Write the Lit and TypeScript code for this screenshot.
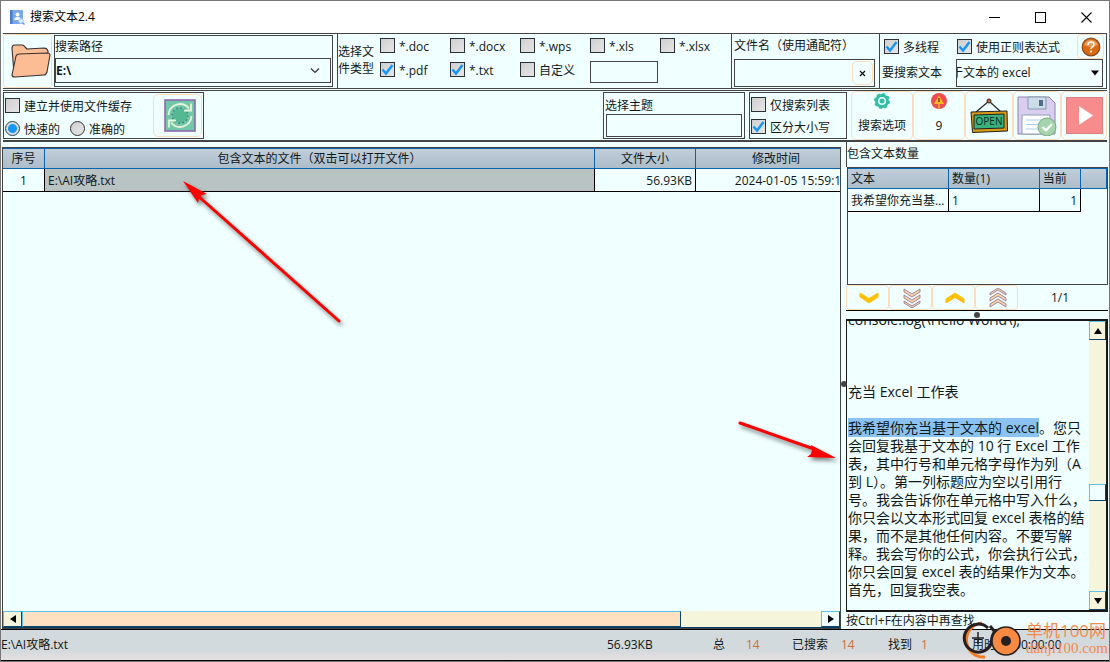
import { LitElement, html, css, svg } from "lit";
import { customElement, state } from "lit/decorators.js";

interface TypeFilter { label: string; on: boolean; }

const chevron = (y: number, color: string) => svg`<path d="M3 ${y}l9 5.5 9-5.5v4l-9 6-9-6z" fill=${color} stroke=${color}/>`;

@customElement("app-root")
export class AppRoot extends LitElement {
  @state() private types: TypeFilter[] = [
    { label: "*.doc", on: false },
    { label: "*.docx", on: false },
    { label: "*.wps", on: false },
    { label: "*.xls", on: false },
    { label: "*.xlsx", on: false },
    { label: "*.pdf", on: true },
    { label: "*.txt", on: true },
    { label: "自定义", on: false },
  ];

  static styles = css`
    :host {
      --ink: #101818; --line: #444; --soft: #fbdcbc; --blue: #0a64ad; --paper: #f0ffff;
      display: flex; flex-direction: column; position: relative; box-sizing: border-box;
      height: 100vh; overflow: hidden; background: var(--paper); color: var(--ink);
      border: 1px solid #777;
      font: 12px/16px "Open Sans", "Noto Sans CJK SC", sans-serif;
    }
    * { box-sizing: border-box; }
    button, input, select { font: inherit; color: inherit; margin: 0; padding: 0; border-radius: 0; }
    button { background: none; border: 1px solid var(--soft); display: flex; align-items: center; justify-content: center; }
    svg { display: block; flex: none; }

    .title { flex: none; height: 32px; display: flex; align-items: center; background: #fff; color: #000; padding-left: 8px; }
    .title h1 { flex: 1; font-size: 12px; font-weight: 400; margin: 0 0 0 5px; }
    .title button { width: 46px; height: 30px; border: 0; }

    .field { background: var(--paper); border: 1px solid var(--line); outline: 0; min-width: 0; }
    .label { display: block; white-space: nowrap; }
    .check { display: flex; align-items: center; gap: 4px; white-space: nowrap; height: 16px; }
    .check span { padding-top: 3px; }
    .check input {
      appearance: none; flex: none; width: 15px; height: 15px; border: 1px solid #2a3038;
      background: linear-gradient(135deg, #cfcfcf, #e6e6e6);
    }
    .check input[type="checkbox"]:checked {
      background: url("data:image/svg+xml,%3Csvg xmlns='http://www.w3.org/2000/svg' viewBox='0 0 13 13'%3E%3Cpath d='M1.5 6.5L5 10.5L11.5 2' fill='none' stroke='%231396f5' stroke-width='2.4'/%3E%3C/svg%3E"),
        linear-gradient(135deg, #cfcfcf, #e6e6e6);
    }
    .check input[type="radio"] { border-radius: 50%; border-color: #333; }
    .check input[type="radio"]:checked { background: radial-gradient(circle, #1396f5 0 4px, #dcdcdc 5px); border-color: #1d4565; }

    .bar { flex: none; display: flex; margin: 0 2px; border: 1px solid var(--line); border-left: 0; height: 56px; }
    .folder { width: 49px; border-radius: 3px; padding-left: 6px; }
    .path { flex: 1; margin: 1px 4px 1px 2px; padding: 3px 1px 2px 0; border: 1px solid var(--line); }
    .path select {
      appearance: none; display: block; width: 100%; height: 25px; margin-top: 3px; font-weight: 700;
      background: url("data:image/svg+xml,%3Csvg xmlns='http://www.w3.org/2000/svg' width='10' height='6'%3E%3Cpath d='M1 .5l4 4 4-4' fill='none' stroke='%23333' stroke-width='1.2'/%3E%3C/svg%3E") no-repeat right 10px center;
    }
    .types { flex: none; display: flex; border-left: 1px solid var(--line); width: 394px; }
    .types .label { width: 42px; line-height: 17px; padding-top: 9px; white-space: pre; }
    .grid { display: grid; grid-template-columns: repeat(5, 70px); grid-template-rows: 24px 24px; padding-top: 3px; }
    .custom { width: 68px; height: 22px; }
    .name { flex: none; width: 148px; border-left: 1px solid var(--line); padding: 4px 4px 0 2px; }
    .combo { display: flex; border: 1px solid var(--line); background: var(--paper); }
    .combo input { flex: 1; min-width: 0; border: 0; outline: 0; background: none; }
    .name .combo { height: 28px; margin-top: 5px; padding: 1px; }
    .clear { width: 21px; border-radius: 5px; }
    .query { flex: none; width: 227px; border-left: 1px solid var(--line); padding-left: 4px; }
    .query-top { display: flex; height: 25px; }
    .query-top .check { margin-top: 4px; }
    .multi { width: 73px; }
    .help { width: 27px; margin: 0 2px 0 auto; border-radius: 4px; }
    .query-row { display: flex; align-items: center; }
    .query-row label { flex: none; width: 72px; margin-left: -2px; white-space: nowrap; }
    .query-row .combo { flex: 1; min-width: 0; height: 28px; margin: 0 3px 0 2px; }
    .query-row input { text-indent: -6px; }
    .drop { border: 0; width: 15px; }

    .tools { flex: none; display: flex; gap: 4px; height: 52px; margin: 1px 2px 0 2px; border-top: 1px solid var(--line); border-bottom: 2px solid var(--line); }
    .box { border: 1px solid var(--line); margin: 1px 0; }
    .cache { display: flex; width: 201px; margin-right: auto; }
    .cache-opts { flex: 1; padding: 4px 0 0 1px; }
    .radios { display: flex; gap: 10px; margin-top: 7px; }
    .refresh { width: 49px; margin: 1px 1px; border-radius: 5px; padding-left: 4px; }
    .theme { width: 142px; padding: 5px 2px 0 1px; }
    .theme select { appearance: none; display: block; width: 136px; height: 23px; margin: 0 0 0 1px; }
    .flags { width: 98px; padding: 3px 0 0 1px; display: grid; grid-auto-rows: 22px; }
    .actions { display: flex; }
    .actions button { border-radius: 5px; }
    .stack { flex-direction: column; justify-content: space-between; padding: 1px 0 5px; }
    .w62 { width: 62px; } .w52 { width: 52px; } .w48 { width: 48px; } .w46 { width: 46px; }

    .main { flex: 1; min-height: 0; display: grid; grid-template-columns: minmax(0, 1fr) 262px; gap: 5px; margin: 0 1px; }
    .files { margin-top: 5px; border: 1px solid var(--line); display: flex; flex-direction: column; min-height: 0; }
    .clip { flex: 1; min-height: 0; overflow: hidden; }
    table { border-collapse: separate; border-spacing: 0; table-layout: fixed; }
    th { font-weight: 400; height: 21px; padding: 0 3px; border: solid var(--blue); border-width: 1px 1px 1px 0; background: linear-gradient(#c0ceda, #adbdca); }
    td { height: 23px; padding: 2px 3px 0; border: solid #000; border-width: 0 1px 1px 0; white-space: nowrap; overflow: hidden; text-overflow: ellipsis; }
    .file-table { width: calc(100% + 17px); }
    .file-table .date { padding-right: 8px; }
    .c-no { width: 42px; } .c-size { width: 101px; } .c-date { width: 161px; }
    .mid { text-align: center; } .end { text-align: right; }
    .picked { background: #b9c3c3; }

    .hscroll { flex: none; display: flex; height: 17px; background: #f5f5dc; border-bottom: 1px solid #063f60; }
    .arrow { flex: none; width: 19px; height: 100%; background: #f5f5dc; border: 1px solid #0b4468; border-top-color: #5cc0e8; border-left-color: #5cc0e8; }
    .vscroll .arrow { width: 17px; height: 19px; }
    .hthumb { width: 82.5%; background: #fde1c0; border: 1px solid #0b4468; border-top-color: #5cc0e8; border-left-color: #5cc0e8; }
    .htrack { flex: 1; display: flex; }
    .right-arrow { background: var(--paper); }

    .side { display: flex; flex-direction: column; min-height: 0; }
    .side .label { padding: 4px 0 5px; border-left: 1px solid var(--line); }
    .counts { flex: none; height: 118px; border: 1px solid var(--line); margin: 0 0 0 1px; }
    .counts table { width: 100%; }
    .counts th { text-align: left; }
    .nav { flex: none; display: flex; height: 26px; border-bottom: 1px solid #000; }
    .nav button { width: 43px; border-radius: 4px; padding-left: 3px; }
    .nav output { flex: 1; display: flex; align-items: center; justify-content: center; padding-right: 6px; }
    .split { flex: none; height: 8px; display: flex; justify-content: center; align-items: center; }
    .dot { width: 6px; height: 6px; border-radius: 50%; background: #444; }
    .viewer { flex: 1; min-height: 0; display: flex; border: 2px solid #181818; border-left-width: 1px; }
    .content { flex: 1; min-width: 0; overflow: hidden; font-size: 14px; line-height: 18px; padding-left: 1px; }
    .content p { margin: 0; white-space: pre-wrap; }
    .content mark { background: #8ac3f2; color: inherit; }
    .vscroll { flex: none; width: 17px; display: flex; flex-direction: column; background: #f5f5dc; }
    .vtrack { flex: 1; display: flex; flex-direction: column; }
    .before { flex: 58; } .after { flex: 36; }
    .vthumb { height: 17px; border: 1px solid #0b4468; border-top-color: #5cc0e8; border-left-color: #5cc0e8; background: var(--paper); }
    .hint { flex: none; height: 17px; padding-top: 1px; }

    .status { flex: none; display: flex; align-items: center; height: 32px; border: solid #000; border-width: 1px 0; background: linear-gradient(#d3dadd 70%, #e8e0e0); }
    .status .name-cell { flex: 1; }
    .status b { font-weight: 400; color: #cd7032; }
    .s-size { width: 106px; } .s-total { width: 33px; } .s-n { width: 46px; } .s-done { width: 49px; } .s-n2 { width: 47px; } .s-found { width: 33px; } .s-n3 { width: 51px; }
    .s-time { width: 137px; display: flex; gap: 18px; }

    .overlay { position: absolute; pointer-events: none; overflow: visible; filter: drop-shadow(2px 3px 2px rgba(0, 0, 0, 0.5)); }
    .arrow-a { left: 182px; top: 180px; }
    .arrow-b { right: 273px; top: 421px; }
    .grip { position: absolute; right: 262px; top: 380px; }
    .brand { position: absolute; right: 1px; bottom: 0; display: flex; align-items: center; gap: 3px; color: #f58a4b; pointer-events: none; }
    .brand-text { display: flex; flex-direction: column; font-size: 17px; line-height: 18px; white-space: nowrap; }
    .brand-text small { font: 15px/17px "Liberation Serif", serif; }
  `;

  protected firstUpdated() {
    const content = this.renderRoot.querySelector(".content");
    if (content) content.scrollTop = 10;
  }

  private toggle(i: number) {
    this.types = this.types.map((t, n) => (n === i ? { ...t, on: !t.on } : t));
  }

  private check(label: string, on = false, cls = "") {
    return html`<label class="check ${cls}"><input type="checkbox" .checked=${on}><span>${label}</span></label>`;
  }

  private tri(d: string) {
    return html`<svg width="8" height="8" viewBox="0 0 8 8"><path d=${d} fill="#000"/></svg>`;
  }

  private titleBar() {
    return html`<header class="title">
      <svg width="16" height="16" viewBox="0 0 16 16"><rect x="1" y="1" width="13" height="14" rx="1" fill="#78a9ec"/><path d="M1 1h2.5v14H1z" fill="#4a7fd0"/><circle cx="8.5" cy="5.5" r="2" fill="#fff"/><path d="M5 11c0-4 7-4 7 0z" fill="#fff"/><circle cx="12" cy="12" r="2.3" fill="#dceaff" stroke="#a9c8f5"/><path d="M13.6 13.6L15.5 15.5" stroke="#6294df" stroke-width="1.3"/></svg>
      <h1>搜索文本2.4</h1>
      <button aria-label="最小化"><svg width="11" height="11"><path d="M0 5.5h11" stroke="#000"/></svg></button>
      <button aria-label="最大化"><svg width="11" height="11"><rect x=".5" y=".5" width="10" height="10" fill="none" stroke="#000"/></svg></button>
      <button aria-label="关闭"><svg width="11" height="11"><path d="M.5.5l10 10M10.5.5l-10 10" stroke="#000" stroke-width="1.1"/></svg></button>
    </header>`;
  }

  private searchBar() {
    return html`<section class="bar">
      <button class="folder" aria-label="选择文件夹"><svg width="42" height="36" viewBox="0 0 42 36" fill="#fdbd94" stroke="#333" stroke-width="1.1" stroke-linejoin="round"><path d="M4 31L2 5q0-3 3-3h7q2 0 3 2l2 2 17-1q3 0 4 3v7L10 30z"/><path d="M6 13q1-2 3-2l28-1q3 0 3 2l-3 17q-1 3-3 3L5 34q-3 0-3-2z"/></svg></button>
      <div class="path">
        <label class="label" for="path">搜索路径</label>
        <select id="path" class="field"><option>E:\\</option></select>
      </div>
      <div class="types">
        <span class="label">选择文${"\n"}件类型</span>
        <div class="grid">
          ${this.types.map((t, i) => html`<label class="check"><input type="checkbox" .checked=${t.on} @change=${() => this.toggle(i)}><span>${t.label}</span></label>`)}
          <input class="field custom" aria-label="自定义类型">
        </div>
      </div>
      <div class="name">
        <label class="label" for="pattern">文件名（使用通配符）</label>
        <div class="combo"><input id="pattern"><button class="clear" aria-label="清除"><svg width="7" height="7"><path d="M1 1l5 5M6 1L1 6" stroke="#111" stroke-width="1.2"/></svg></button></div>
      </div>
      <div class="query">
        <div class="query-top">
          ${this.check("多线程", true, "multi")}
          ${this.check("使用正则表达式", true)}
          <button class="help" aria-label="帮助"><svg width="20" height="20" viewBox="0 0 20 20"><circle cx="10" cy="10" r="8.8" fill="#dc6a12" stroke="#8a4a1c" stroke-width="1.2"/><path d="M3 8a7.4 7.4 0 0 1 14 0q-7 4-14 0z" fill="#ee9a50"/><path d="M7 8q0-3 3-3t3 2.6q0 1.5-1.8 2.4Q10 10.8 10 12" fill="none" stroke="#fff" stroke-width="1.6"/><circle cx="10" cy="14.5" r="1.1" fill="#fff"/></svg></button>
        </div>
        <div class="query-row">
          <label for="query">要搜索文本</label>
          <div class="combo"><input id="query" value="于文本的 excel"><button class="drop" aria-label="展开">${this.tri("M0 1.5h8L4 6.5z")}</button></div>
        </div>
      </div>
    </section>`;
  }

  private toolBar() {
    return html`<section class="tools">
      <div class="box cache">
        <div class="cache-opts">
          ${this.check("建立并使用文件缓存")}
          <div class="radios">
            <label class="check"><input type="radio" name="mode" checked><span>快速的</span></label>
            <label class="check"><input type="radio" name="mode"><span>准确的</span></label>
          </div>
        </div>
        <button class="refresh" aria-label="刷新"><svg width="32" height="33" viewBox="0 0 32 33"><rect x="1" y="1" width="30" height="31" fill="#70c8a8" stroke="#8e6aae" stroke-width="1.6"/><circle cx="16" cy="16.5" r="7.500" fill="#56b893"/><circle cx="16" cy="16.5" r="7.8" fill="none" stroke="#3f7f88" stroke-width="1.6" stroke-dasharray="1.5 2.6"/><path d="M4.500 16A11.5 11.5 0 0 1 25 9.5M27.5 17A11.5 11.5 0 0 1 7 23.5" fill="none" stroke="#e8f3d8" stroke-width="1.8"/><path d="M27 4.500v7h-7M5 28.500v-7h7" fill="none" stroke="#e8f3d8" stroke-width="1.8"/></svg></button>
      </div>
      <div class="box theme"><label for="theme">选择主题</label><select id="theme" class="field"></select></div>
      <div class="box flags">${this.check("仅搜索列表")}${this.check("区分大小写", true)}</div>
      <div class="actions">
        <button class="stack w62"><svg width="16" height="16" viewBox="0 0 16 16"><circle cx="8" cy="8" r="5.5" fill="none" stroke="#2fbfa5" stroke-width="3"/><circle cx="8" cy="8" r="7" fill="none" stroke="#2fbfa5" stroke-width="2" stroke-dasharray="3 2.5"/><circle cx="8" cy="8" r="2.5" fill="#2fbfa5"/></svg>搜索选项</button>
        <button class="stack w52"><svg width="16" height="16" viewBox="0 0 16 16"><circle cx="8" cy="8" r="8" fill="#ee4b50"/><path d="M8 2.5l5 8.500H3z" fill="#fdb827"/><path d="M8 5v4" stroke="#7a3a18" stroke-width="1.5"/><path d="M8 10v5.5" stroke="#fdb827" stroke-width="1.5"/></svg>9</button>
        <button class="w48" aria-label="打开"><svg width="38" height="36" viewBox="0 0 38 36"><path d="M6 14L19 3l12 11" fill="none" stroke="#222" stroke-width="1.2"/><circle cx="19" cy="3" r="2" fill="#d9692b" stroke="#222"/><path d="M1 14l36-1 .5 20-35 1.5z" fill="#d99a17" stroke="#222"/><path d="M4 17l30-1v14l-30 1z" fill="#38b17d" stroke="#222"/><text x="19" y="27" font-size="10" text-anchor="middle" fill="#142a22" font-family="Open Sans">OPEN</text></svg></button>
        <button class="w48" aria-label="保存"><svg width="40" height="40" viewBox="0 0 40 40"><path d="M1 1h31l6 6v31H1z" fill="#d9cdf0" stroke="#8e82aa"/><path d="M11 1h18v12H11z" fill="#cbdde9" stroke="#8799ae"/><path d="M22 4h4v6h-4z" fill="#526b86"/><path d="M5 19h28v19H5z" fill="#fff" stroke="#8e9db5"/><path d="M9 24h20M9 28.5h14M9 33h14" stroke="#a7cff0"/><circle cx="30" cy="31" r="9" fill="#a5d5ad" stroke="#78a883"/><path d="M25.5 31l3.5 3.5 6-6.5" fill="none" stroke="#fff" stroke-width="2.2"/></svg></button>
        <button class="w46" aria-label="开始"><svg width="37" height="37" viewBox="0 0 37 37"><rect x=".5" y=".5" width="36" height="36" fill="#f88c8c" stroke="#d98080"/><path d="M13 9l14 9.5L13 28z" fill="#fff"/></svg></button>
      </div>
    </section>`;
  }

  private fileList() {
    return html`<section class="files">
      <div class="clip">
        <table class="file-table">
          <colgroup><col class="c-no"><col><col class="c-size"><col class="c-date"></colgroup>
          <thead><tr><th>序号</th><th>包含文本的文件（双击可以打开文件）</th><th>文件大小</th><th>修改时间</th></tr></thead>
          <tbody><tr><td class="mid">1</td><td class="picked">E:\\AI攻略.txt</td><td class="end">56.93KB</td><td class="end date">2024-01-05 15:59:12</td></tr></tbody>
        </table>
      </div>
      <div class="hscroll">
        <button class="arrow" aria-label="向左">${this.tri("M7 0v8L1 4z")}</button>
        <div class="htrack"><div class="hthumb"></div></div>
        <button class="arrow right-arrow" aria-label="向右">${this.tri("M1 0v8l6-4z")}</button>
      </div>
    </section>`;
  }

  private sidePanel() {
    const layered = (d: string) => html`<svg width="20" height="20" viewBox="0 0 20 20" fill="#fbd3a2" stroke="#8b6f9a" stroke-width=".8"><path d=${d}/></svg>`;
    return html`<aside class="side">
      <span class="label">包含文本数量</span>
      <div class="counts">
        <table>
          <colgroup><col style="width:39%"><col style="width:35%"><col style="width:16%"><col></colgroup>
          <thead><tr><th>文本</th><th>数量(1)</th><th>当前</th><th></th></tr></thead>
          <tbody><tr><td>我希望你充当基于文本的 excel</td><td>1</td><td class="end">1</td></tr></tbody>
        </table>
      </div>
      <div class="nav">
        <button aria-label="下一个"><svg width="24" height="20" viewBox="0 0 24 20">${chevron(5, "#ffc107")}</svg></button>
        <button aria-label="最后一个">${layered("M2 1l8 5 8-5v3l-8 5-8-5zM2 7l8 5 8-5v3l-8 5-8-5zM2 13l8 5 8-5v2l-8 5-8-5z")}</button>
        <button aria-label="上一个"><svg width="24" height="20" viewBox="0 0 24 20"><path d="M3 15l9-5.5 9 5.5v-4l-9-6-9 6z" fill="#ffc107" stroke="#ffc107"/></svg></button>
        <button aria-label="第一个">${layered("M2 7l8-5 8 5v-2l-8-5-8 5zM2 13l8-5 8 5v-3l-8-5-8 5zM2 19l8-5 8 5v-3l-8-5-8 5z")}</button>
        <output>1/1</output>
      </div>
      <div class="split"><div class="dot"></div></div>
      <div class="viewer">
        <div class="content" tabindex="0"><p>console.log(\\Hello World\\);${"\n\n\n\n"}充当 Excel 工作表${"\n\n"}<mark>我希望你充当基于文本的 excel</mark>。您只会回复我基于文本的 10 行 Excel 工作表，其中行号和单元格字母作为列（A 到 L）。第一列标题应为空以引用行号。我会告诉你在单元格中写入什么，你只会以文本形式回复 excel 表格的结果，而不是其他任何内容。不要写解释。我会写你的公式，你会执行公式，你只会回复 excel 表的结果作为文本。首先，回复我空表。${"\n\n\n"}</p></div>
        <div class="vscroll">
          <button class="arrow" aria-label="向上">${this.tri("M0 7h8L4 1z")}</button>
          <div class="vtrack"><div class="before"></div><div class="vthumb"></div><div class="after"></div></div>
          <button class="arrow" aria-label="向下">${this.tri("M0 1h8L4 7z")}</button>
        </div>
      </div>
      <div class="hint">按Ctrl+F在内容中再查找</div>
    </aside>`;
  }

  private statusBar() {
    return html`<footer class="status">
      <span class="name-cell">E:\\AI攻略.txt</span><span class="s-size">56.93KB</span>
      <span class="s-total">总</span><b class="s-n">14</b>
      <span class="s-done">已搜索</span><b class="s-n2">14</b>
      <span class="s-found">找到</span><b class="s-n3">1</b>
      <span class="s-time"><span>用时</span><span>00:00:00</span></span>
    </footer>`;
  }

  render() {
    return html`
      ${this.titleBar()}${this.searchBar()}${this.toolBar()}
      <main class="main">${this.fileList()}${this.sidePanel()}</main>
      ${this.statusBar()}
      <svg class="overlay arrow-a" width="160" height="145" viewBox="0 0 160 145"><path d="M14 14L156 140" stroke="#f00" stroke-width="3" stroke-linecap="round"/><path d="M0 0l24 13-5 1-3 3-1 5z" fill="#f00"/></svg>
      <svg class="overlay arrow-b" width="98" height="40" viewBox="0 0 98 40"><path d="M2 1l74 26" stroke="#f00" stroke-width="3" stroke-linecap="round"/><path d="M98 36l-25-13 1 5-1 4-4 3z" fill="#f00"/></svg>
      <div class="dot grip"></div>
      <div class="brand">
        <svg width="64" height="44" viewBox="0 0 64 44" fill="none"><path d="M23 6A17 17 0 1 0 26 40" stroke="#f47b20" stroke-width="3"/><path d="M29 11A14 14 0 1 0 32 27Q33 13 40 13" stroke="#262022" stroke-width="3"/><path d="M31 9l5 6" stroke="#262022" stroke-width="3"/><path d="M13 21h12M19 15v12" stroke="#262022" stroke-width="1.5"/><circle cx="47" cy="24" r="14" fill="#f68a42" stroke="#262022" stroke-width="1.5"/><circle cx="47" cy="24" r="5" fill="#262022"/></svg>
        <div class="brand-text"><span>单机100网</span><small>danji100.com</small></div>
      </div>`;
  }
}
